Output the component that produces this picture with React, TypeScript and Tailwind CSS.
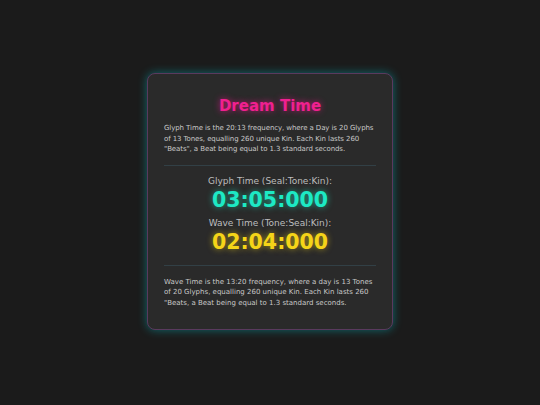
export default function App() {
  return (
    <div
      className="w-[540px] h-[405px] bg-[#1b1b1b] flex items-center justify-center"
      style={{ fontFamily: '"DejaVu Sans", Verdana, sans-serif' }}
    >
      <div className="w-[246px] h-[257px] mt-[-2px] rounded-[8px] bg-[#2a2a2a] border border-[#5a3a5e] shadow-[0_0_10px_rgba(0,200,210,0.45)] px-[16px] pt-[22px] flex flex-col">
        {/* Header */}
        <h1 className="text-center text-[15px] font-bold leading-[20px] text-[#f0208f] [text-shadow:0_0_6px_rgba(255,20,147,0.7)]">
          Dream Time
        </h1>
        <p className="mt-[7px] text-[7px] leading-[10.5px] tracking-[-0.09px] text-[#c8c8c8]">
          Glyph Time is the 20:13 frequency, where a Day is 20 Glyphs of 13 Tones, equalling 260 unique Kin. Each Kin lasts 260 "Beats", a Beat being equal to 1.3 standard seconds.
        </p>

        <div className="mt-[10px] h-px bg-[#324046]" />

        {/* Clocks */}
        <div className="flex flex-col items-center pt-[9px]">
          <span className="text-[9px] leading-[12px] text-[#bdbdbd]">Glyph Time (Seal:Tone:Kin):</span>
          <span className="text-[20.5px] font-bold leading-[26px] text-[#1de9c4] [text-shadow:0_0_6px_rgba(29,233,196,0.6)]">
            03:05:000
          </span>
          <span className="mt-[4px] text-[9px] leading-[12px] text-[#bdbdbd]">Wave Time (Tone:Seal:Kin):</span>
          <span className="text-[20.5px] font-bold leading-[26px] text-[#f5d418] [text-shadow:0_0_6px_rgba(245,212,24,0.6)]">
            02:04:000
          </span>
        </div>

        <div className="mt-[10px] h-px bg-[#324046]" />

        <p className="mt-[11px] text-[7px] leading-[10.5px] text-[#c8c8c8]">
          Wave Time is the 13:20 frequency, where a day is 13 Tones of 20 Glyphs, equalling 260 unique Kin. Each Kin lasts 260 "Beats, a Beat being equal to 1.3 standard seconds.
        </p>
      </div>
    </div>
  );
}
